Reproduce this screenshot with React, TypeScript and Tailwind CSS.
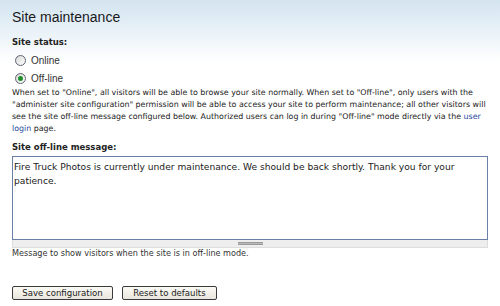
import React from "react";

function Radio({ checked, label }: { checked?: boolean; label: string }) {
  return (
    <div className="flex items-center h-[18px] pl-[3px]">
      <span className="w-[11px] h-[11px] rounded-full border border-[#5e6470] bg-[linear-gradient(135deg,#d8d8d8,#ffffff)] flex items-center justify-center">
        {checked && <span className="w-[5px] h-[5px] rounded-full bg-[#1f8f2a]" />}
      </span>
      <span className="ml-[5px] text-[10px] text-[#333] [font-family:'Liberation_Sans',Arial,sans-serif]">{label}</span>
    </div>
  );
}

export default function App() {
  const v = "[font-family:'DejaVu_Sans',Verdana,sans-serif]";
  return (
    <div className="w-[500px] h-[306px] overflow-hidden bg-[linear-gradient(to_bottom,#d3e4f0_0px,#ffffff_62px)] px-3 pt-[9px] text-[#222]">
      <h1 className="text-[14px] leading-[17px] [font-family:'Liberation_Sans',Arial,sans-serif] text-[#1a1a1a]">Site maintenance</h1>
      <div className={`mt-[11px] text-[8.5px] leading-[11px] font-bold ${v}`}>Site status:</div>
      <div className="mt-[3px]">
        <Radio label="Online" />
        <Radio checked label="Off-line" />
      </div>
      <div className={`mt-0 text-[7.9px] leading-[12px] whitespace-nowrap text-[#222] ${v}`}>
        When set to "Online", all visitors will be able to browse your site normally. When set to "Off-line", only users with the<br />
        "administer site configuration" permission will be able to access your site to perform maintenance; all other visitors will<br />
        see the site off-line message configured below. Authorized users can log in during "Off-line" mode directly via the <span className="text-[#27489b]">user</span><br />
        <span className="text-[#27489b]">login</span> page.
      </div>
      <div className={`mt-[7px] text-[8.5px] leading-[11px] font-bold ${v}`}>Site off-line message:</div>
      <div className="mt-[3px] w-[476px]">
        <div className="h-[84px] border border-[#6a7fa6] bg-white px-[1px] pt-[3px] text-[9.15px] leading-[14px] text-[#1a1a1a] [font-family:'DejaVu_Sans',Verdana,sans-serif]">
          Fire Truck Photos is currently under maintenance. We should be back shortly. Thank you for your patience.
        </div>
        <div className="h-[8px] bg-[#eeeeee] border border-t-0 border-[#dddddd] flex justify-center items-center">
          <div className="w-[25px] h-[3px] bg-[#bbbbbb] border-y border-[#999]" />
        </div>
      </div>
      <div className={`mt-0 text-[8.1px] leading-[11px] text-[#333] ${v}`}>Message to show visitors when the site is in off-line mode.</div>
      <div className="mt-[27px] flex gap-[9px]">
        <button className="h-[14px] w-[101px] rounded-[2px] border border-[#3a3a3a] bg-[linear-gradient(to_bottom,#fbfaf5,#e8e6dc)] text-[9.5px] leading-[12px] text-[#222] [font-family:'DejaVu_Sans_Condensed','DejaVu_Sans',sans-serif]">Save configuration</button>
        <button className="h-[14px] w-[95px] rounded-[2px] border border-[#3a3a3a] bg-[linear-gradient(to_bottom,#fbfaf5,#e8e6dc)] text-[9.5px] leading-[12px] text-[#222] [font-family:'DejaVu_Sans_Condensed','DejaVu_Sans',sans-serif]">Reset to defaults</button>
      </div>
    </div>
  );
}
